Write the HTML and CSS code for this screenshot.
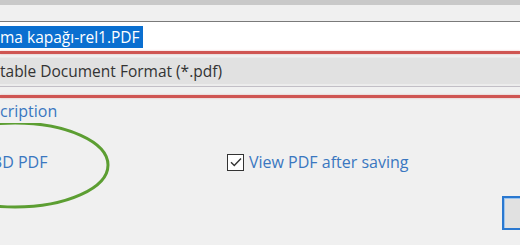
FILE: index.html
```html
<!DOCTYPE html>
<html lang="tr">
<head>
  <meta charset="UTF-8" />
  <title>Save As PDF</title>
  <link rel="stylesheet" href="styles.css">
</head>
<body>
  <div class="topbar"></div>

  <div class="filename">
    <span class="selected">ma kapağı-rel1.PDF</span>
  </div>
  <div class="mark"></div>

  <div class="savetype">table Document Format (*.pdf)</div>
  <div class="savetype-edge"></div>
  <div class="mark"></div>

  <a class="link" href="#">cription</a>

  <div class="options">
    <div class="option-left">
      <a class="link cut" href="#">3D PDF</a>
    </div>
    <label class="check">
      <span class="box">
        <svg width="12" height="10" viewBox="0 0 12 10"><path d="M1 5.2 L4.3 8.4 L11 1.5" fill="none" stroke="#333" stroke-width="1.4"/></svg>
      </span>
      <span class="link">View PDF after saving</span>
    </label>
  </div>

  <div class="buttons">
    <button class="btn"></button>
  </div>

  <svg class="circle" width="140" height="90" viewBox="0 0 140 90">
    <ellipse cx="15" cy="42" rx="93" ry="42" fill="none" stroke="#5c9e32" stroke-width="3"/>
  </svg>
</body>
</html>
```

FILE: styles.css
```css
body {
  margin: 0;
  background-color: #f0f0f0;
  font-family: "Open Sans", "Noto Sans", sans-serif;
  font-size: 16px;
  color: #333;
  position: relative;
  height: 245px;
  overflow: hidden;
}
.topbar {
  height: 5px;
  background-color: #c9c9c9;
  margin-bottom: 16px;
}
.filename {
  height: 29px;
  border-top: 1px solid #7a7a7a;
  background-color: white;
  display: flex;
  align-items: center;
  font-size: 15.5px;
}
.selected {
  background-color: #0a6fd0;
  color: white;
  line-height: 22px;
  padding-right: 3px;
}
.mark {
  height: 3px;
  background-color: #cf5552;
  box-shadow: 0 0 2px rgba(207, 85, 82, 0.45);
}
.savetype {
  margin-top: 3px;
  height: 26px;
  line-height: 26px;
  font-size: 15.5px;
  background-color: #e1e1e1;
  border-top: 1px solid #e9e9e9;
}
.savetype-edge {
  height: 2px;
  background-color: #ececec;
  border-bottom: 1px solid #c2bfc6;
  margin-bottom: 8px;
}
.link {
  color: #3a77c0;
  text-decoration: none;
}
body > .link {
  display: block;
  margin-top: 3px;
  line-height: 20px;
}
.cut {
  margin-left: -7px;
}
.options {
  display: flex;
  align-items: center;
  margin-top: 30px;
}
.option-left {
  width: 227px;
}
.check {
  display: flex;
  align-items: center;
  gap: 5px;
}
.box {
  width: 15px;
  height: 15px;
  border: 1px solid #333;
  background-color: white;
  display: flex;
  align-items: center;
  justify-content: center;
}
.buttons {
  display: flex;
  justify-content: flex-end;
  margin-top: 23px;
}
.btn {
  width: 18px;
  height: 34px;
  border: 2px solid #2a78d0;
  border-right: none;
  box-shadow: inset 1px 1px 0 #9cc4ee;
  background-color: #e1e1e1;
  padding: 0;
}
.circle {
  position: absolute;
  left: 0;
  top: 123px;
}
```
